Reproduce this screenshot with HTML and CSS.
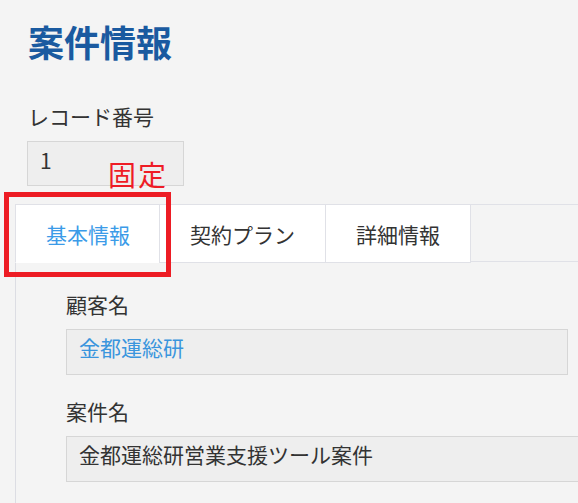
FILE: index.html
```html
<!DOCTYPE html>
<html lang="ja">
<head>
<meta charset="utf-8">
<title>案件情報</title>
<link rel="stylesheet" href="styles.css">
</head>
<body>
<div class="page">
  <h1 class="title">案件情報</h1>
  <div class="record">
    <div class="label">レコード番号</div>
    <div class="input input-small">1</div>
  </div>
  <div class="tabs">
    <div class="tabbar">
      <div class="tab tab-active">基本情報</div>
      <div class="tab">契約プラン</div>
      <div class="tab">詳細情報</div>
    </div>
    <div class="panel">
      <div class="field">
        <div class="label">顧客名</div>
        <div class="input input-mid"><span class="link">金都運総研</span></div>
      </div>
      <div class="field">
        <div class="label">案件名</div>
        <div class="input input-wide">金都運総研営業支援ツール案件</div>
      </div>
    </div>
  </div>
  <div class="note">固定</div>
  <div class="highlight"></div>
</div>
</body>
</html>
```

FILE: styles.css
```css
html, body {
  margin: 0;
  padding: 0;
  overflow: hidden;
  background: #f4f4f4;
}

body {
  font-family: "Noto Sans CJK JP", "Noto Sans", sans-serif;
  color: #333333;
}

.page {
  position: relative;
  padding: 23px 0 0 15px;
  min-height: 480px;
}

.title {
  margin: 0 0 0 13px;
  font-size: 36px;
  line-height: 36px;
  font-weight: 700;
  color: #1a5aa0;
}

.record {
  margin: 47px 0 0 12px;
}

.record .label {
  margin-left: 1px;
}

.label {
  font-size: 21px;
  line-height: 21px;
  color: #333333;
}

.input {
  box-sizing: border-box;
  margin-top: 14px;
  height: 46px;
  padding: 7px 12px 0;
  font-size: 21px;
  line-height: 21px;
  background: #eeeeee;
  border: 1px solid #d6d6d6;
  color: #333333;
  white-space: nowrap;
}

.input-small {
  width: 157px;
  height: 45px;
  padding-top: 8px;
}

.input-mid {
  width: 502px;
}

.input-wide {
  width: 620px;
}

.link {
  color: #3a95dd;
}

.tabs {
  margin-top: 18px;
}

.tabbar {
  display: flex;
  height: 56px;
  border-top: 1px solid #e0e1e7;
  border-bottom: 1px solid #e0e1e7;
}

.tab {
  box-sizing: border-box;
  height: 59px;
  margin: -1px 0 -2px -1px;
  padding: 0 30px;
  display: flex;
  align-items: center;
  font-size: 21px;
  color: #333333;
  background: #ffffff;
  border: 1px solid #e0e1e7;
}

.tab:first-child {
  margin-left: 0;
  padding: 0 29px 0 30px;
}

.tab-active {
  color: #3b9be8;
  border-bottom-color: #ffffff;
}

.panel {
  border-left: 1px solid #dcdde3;
  padding: 32px 0 40px 50px;
  overflow: hidden;
}

.field + .field {
  margin-top: 26px;
}

.note {
  position: absolute;
  left: 108px;
  top: 160px;
  font-size: 28px;
  line-height: 28px;
  letter-spacing: 2px;
  color: #ee1c25;
}

.highlight {
  position: absolute;
  left: 4px;
  top: 192px;
  width: 157px;
  height: 75px;
  border: 5px solid #ed1c24;
}
```
